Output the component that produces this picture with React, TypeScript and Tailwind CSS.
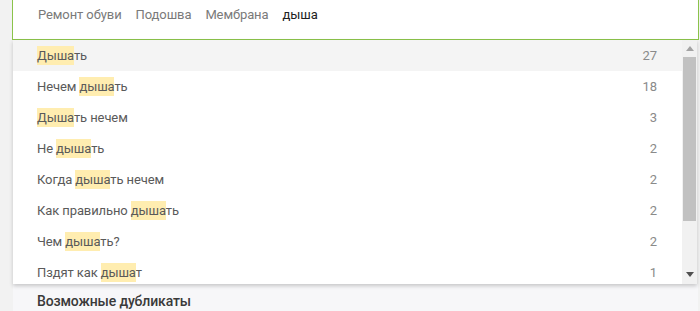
const tags = ['Ремонт обуви', 'Подошва', 'Мембрана'];

const suggestions: { pre: string; hit: string; post: string; count: number }[] = [
  { pre: '', hit: 'Дыша', post: 'ть', count: 27 },
  { pre: 'Нечем ', hit: 'дыша', post: 'ть', count: 18 },
  { pre: '', hit: 'Дыша', post: 'ть нечем', count: 3 },
  { pre: 'Не ', hit: 'дыша', post: 'ть', count: 2 },
  { pre: 'Когда ', hit: 'дыша', post: 'ть нечем', count: 2 },
  { pre: 'Как правильно ', hit: 'дыша', post: 'ть', count: 2 },
  { pre: 'Чем ', hit: 'дыша', post: 'ть?', count: 2 },
  { pre: 'Пздят как ', hit: 'дыша', post: 'т', count: 1 },
];

const Scrollbar = () => (
  <div className="flex h-full w-[15px] shrink-0 flex-col items-center bg-[#f1f1f1]">
    <div className="flex h-[17px] w-full items-center justify-center">
      <svg width="8" height="5" viewBox="0 0 8 5">
        <path d="M0 5 L4 0 L8 5 Z" fill="#a3a3a3" />
      </svg>
    </div>
    <div className="h-[164px] w-[13px] bg-[#c1c1c1]" />
    <div className="flex-1" />
    <div className="flex h-[17px] w-full items-center justify-center pb-[3px]">
      <svg width="8" height="5" viewBox="0 0 8 5">
        <path d="M0 0 L8 0 L4 5 Z" fill="#505050" />
      </svg>
    </div>
  </div>
);

export default function App() {
  return (
    <div
      className="h-[311px] w-[700px] overflow-hidden bg-[#f2f2f2] pl-[12px]"
      style={{ fontFamily: 'Roboto, "Liberation Sans", sans-serif' }}
    >
      <div className="relative">
        <div className="flex h-[40px] w-[687px] items-center gap-[14px] border border-t-0 border-[#8bc34a] bg-white pb-[9px] pl-[25px] text-[13px] tracking-[-0.1px]">
          {tags.map(t => (
            <span key={t} className="text-[#7a7a7a]">{t}</span>
          ))}
          <span className="text-[#212121]">дыша</span>
        </div>

        <div className="absolute left-[1px] top-[40px] z-10 flex h-[244px] w-[684px] bg-white shadow-[0_2px_4px_rgba(0,0,0,0.2)]">
          <div className="flex-1 overflow-hidden">
            {suggestions.map((s, i) => (
              <div
                key={i}
                className={`flex h-[31px] shrink-0 items-center justify-between pl-[24px] pr-[25px] text-[13px] tracking-[-0.1px] ${i === 0 ? 'bg-[#f4f4f4]' : ''}`}
              >
                <span className="text-[#5a5a5a]">
                  {s.pre}
                  <span className="bg-[#ffedb0] py-[2px]">{s.hit}</span>
                  {s.post}
                </span>
                <span className="text-[#8a8a8a]">{s.count}</span>
              </div>
            ))}
          </div>
          <Scrollbar />
        </div>

        <div className="ml-[1px] mt-[244px] h-[40px] w-[685px] bg-[#f7f7f9] pl-[24px] pt-[7px] text-[14px] font-medium tracking-[-0.15px] text-[#3a3a3a]">
          Возможные дубликаты
        </div>
      </div>
    </div>
  );
}
